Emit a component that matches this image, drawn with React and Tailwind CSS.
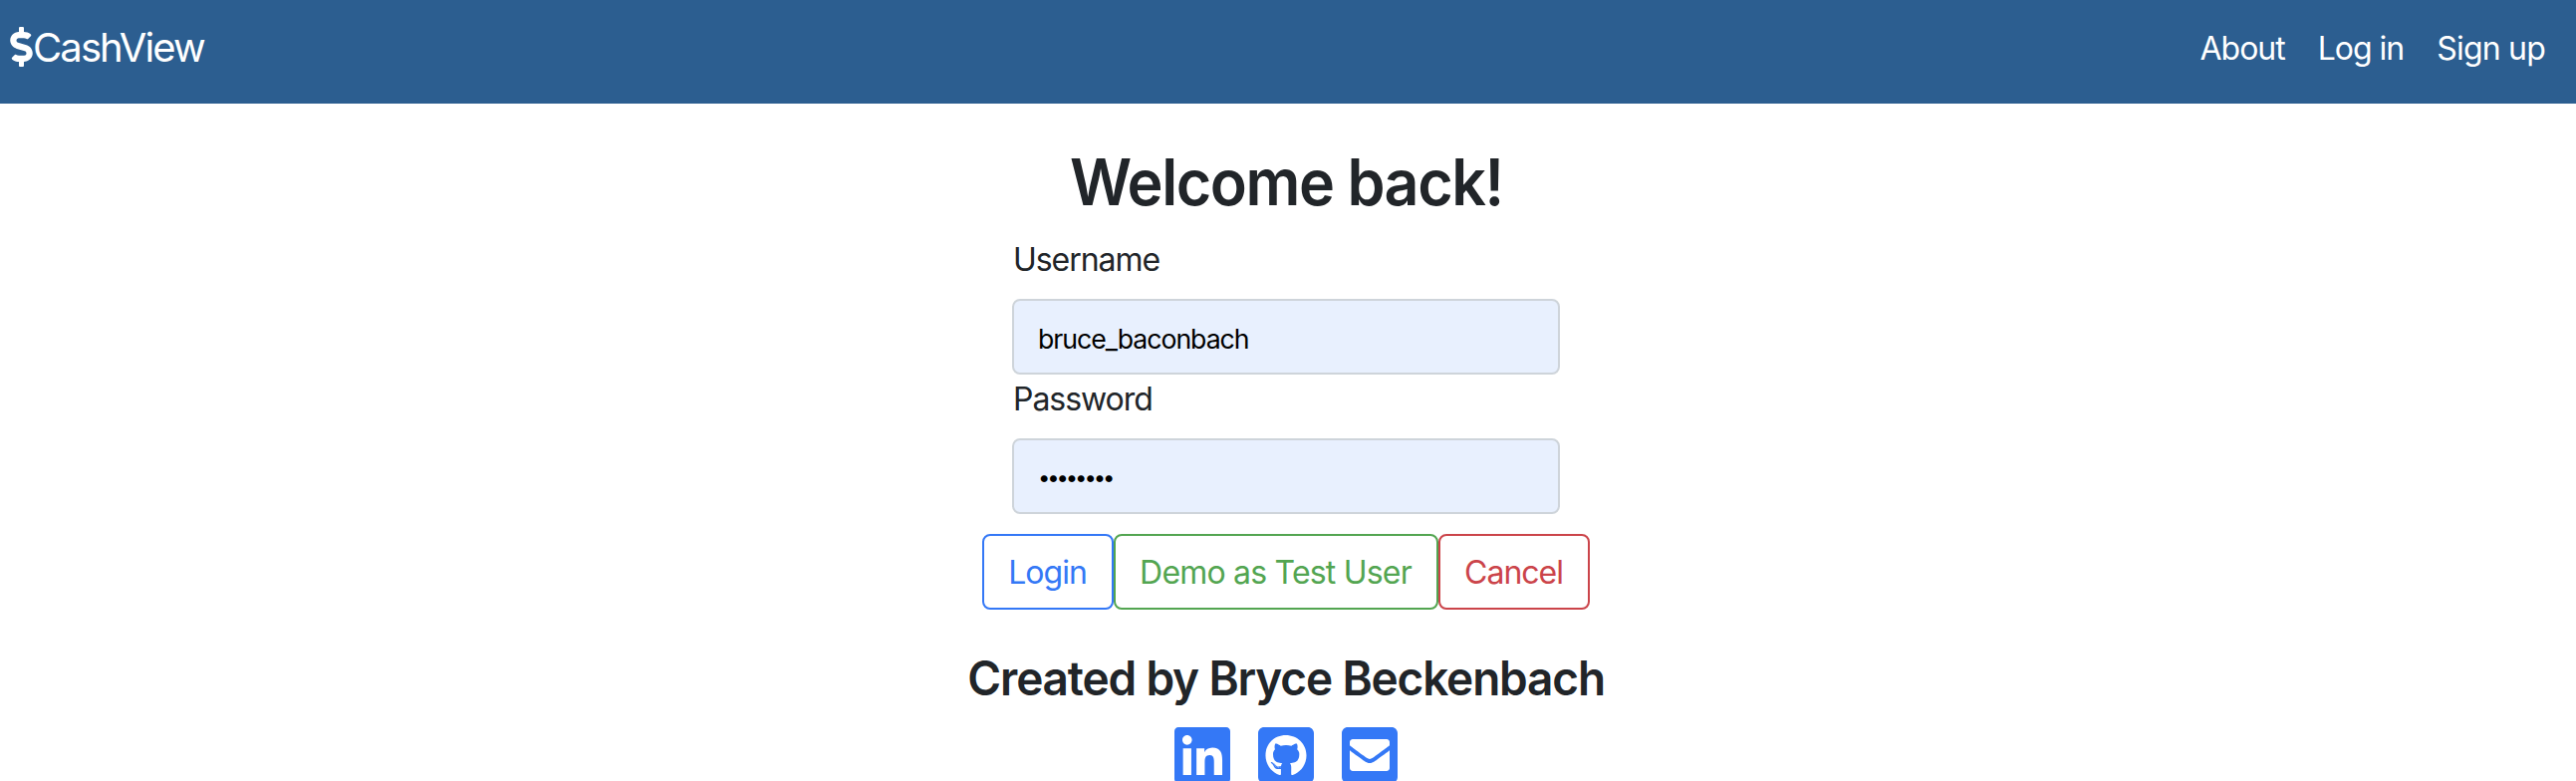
import { FaLinkedin, FaGithubSquare, FaEnvelopeSquare, FaDollarSign } from "react-icons/fa";

function Navbar() {
  return (
    <header className="flex h-[104px] items-start justify-between bg-[#2c5e90] pl-[10px] pr-[31px] text-white">
      <a className="mt-[17px] flex items-start text-[40px] leading-[60px]">
        <FaDollarSign className="mt-[10px] h-[40px] w-[23px]" />
        <span className="pt-[1px] tracking-[-1.9px]">CashView</span>
      </a>
      <nav className="mt-[25px] flex gap-[33px] text-[32px] leading-[48px]">
        <a className="tracking-[-1px]">About</a>
        <a className="tracking-[-1px]">Log in</a>
        <a className="tracking-[-0.8px]">Sign up</a>
      </nav>
    </header>
  );
}

function Field({ label, children }) {
  return (
    <div className="flex h-[140px] flex-col">
      <label className="h-16 pt-[1px] pl-[1px] text-[32px] leading-[48px] tracking-[-1.05px]">{label}</label>
      <div className="flex h-[76px] items-center rounded-lg border-2 border-[#ced4da] bg-[#e8f0fe] px-6 text-[26.67px] leading-8 text-black">
        {children}
      </div>
    </div>
  );
}

export default function App() {
  return (
    <div className="h-[784px] overflow-hidden bg-white font-[Inter,sans-serif] text-[#212529]">
      <Navbar />
      <main className="flex flex-col items-center pt-10 pr-1">
        <h1 className="h-[92px] scale-x-[0.952] text-[64px] font-semibold leading-[77px] tracking-[-1.5px]">
          Welcome back!
        </h1>
        <form className="flex w-[550px] flex-col">
          <Field label="Username"><span className="pt-[3px] tracking-[-1.03px]">bruce_baconbach</span></Field>
          <Field label="Password"><span className="pt-[1px] text-[22px] tracking-[-3.1px]">••••••••</span></Field>
        </form>
        <div className="mt-5 flex h-[76px] text-[32px]">
          <button type="button" className="w-[132px] rounded-lg border-2 border-[#3478f6] pt-[2px] pr-px tracking-[-1px] text-[#3478f6]">Login</button>
          <button type="button" className="w-[326px] rounded-lg border-2 border-[#53a551] pt-[2px] pr-px tracking-[-0.8px] text-[#53a551]">Demo as Test User</button>
          <button type="button" className="w-[152px] rounded-lg border-2 border-[#cb444a] pt-[2px] pr-px tracking-[-1px] text-[#cb444a]">Cancel</button>
        </div>
        <footer className="mt-10 flex flex-col items-center">
          <h2 className="h-[74px] scale-x-[0.957] text-[48px] font-semibold leading-[58px] tracking-[-1.2px]">Created by Bryce Beckenbach</h2>
          <div className="flex gap-[28.4px] text-[#3478f6]">
            <FaLinkedin className="h-16 w-14" />
            <FaGithubSquare className="h-16 w-14" />
            <FaEnvelopeSquare className="h-16 w-14" />
          </div>
        </footer>
      </main>
    </div>
  );
}
